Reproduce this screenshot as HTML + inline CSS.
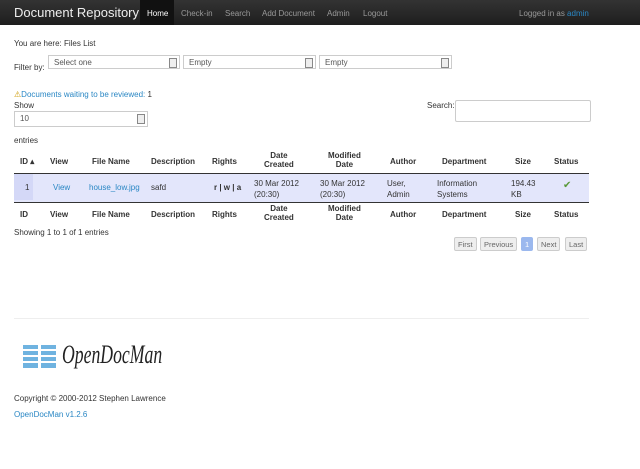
<!DOCTYPE html>
<html><head><style>
body{margin:0;width:640px;height:469px;background:#fff;font-family:"Liberation Sans",sans-serif;font-size:8px;color:#333;position:relative;overflow:hidden}
.a{position:absolute;white-space:nowrap}
.nav{position:absolute;left:0;top:0;width:640px;height:25px;background:linear-gradient(#333,#1e1e1e)}
.nav .a{color:#999;font-size:8px;top:9px}
.sel{position:absolute;height:14px;border:1px solid #ccc;background:#fff;box-sizing:border-box;font-size:8px;color:#555;padding:2px 5px}
.sel:after{content:"";position:absolute;right:2px;top:2px;width:6px;height:8px;border:1px solid #888;background:#eee}
a,.lk{color:#2a87c4}
.th{font-weight:bold;color:#333;text-align:center}
.btn{position:absolute;top:237px;height:14px;border:1px solid #ccc;background:#eee;border-radius:2px;font-size:7.5px;color:#666;line-height:13px;padding:0 3px;box-sizing:border-box}
</style></head><body>
<div class="nav">
<div class="a" style="left:14px;top:5px;font-size:13px;color:#eee">Document Repository</div>
<div style="position:absolute;left:140px;top:0;width:34px;height:25px;background:#111"></div>
<div class="a" style="left:147px;color:#fff">Home</div>
<div class="a" style="left:181px">Check-in</div>
<div class="a" style="left:225px">Search</div>
<div class="a" style="left:262px">Add Document</div>
<div class="a" style="left:327px">Admin</div>
<div class="a" style="left:363px">Logout</div>
<div class="a" style="left:519px">Logged in as <span style="color:#2a87c4">admin</span></div>
</div>
<div class="a" style="left:14px;top:39px">You are here: Files List</div>
<div class="a" style="left:14px;top:63px">Filter by:</div>
<div class="sel" style="left:48px;top:55px;width:132px">Select one</div>
<div class="sel" style="left:183px;top:55px;width:133px">Empty</div>
<div class="sel" style="left:319px;top:55px;width:133px">Empty</div>
<div class="a lk" style="left:14px;top:90px"><span style="color:#c90">⚠</span>Documents waiting to be reviewed: <span style="color:#333">1</span></div>
<div class="a" style="left:14px;top:101px">Show</div>
<div class="sel" style="left:14px;top:111px;width:134px;height:16px">10</div>
<div class="a" style="left:427px;top:101px">Search:</div>
<div style="position:absolute;left:455px;top:100px;width:134px;height:20px;border:1px solid #ccc;border-radius:2px"></div>
<div class="a" style="left:14px;top:136px">entries</div>
<div style="position:absolute;left:14px;top:173px;width:575px;height:28px;background:#e3e6fb;border-top:1px solid #333;border-bottom:1px solid #333"></div>
<div style="position:absolute;left:14px;top:174px;width:19px;height:26px;background:#d4d8f7"></div>
<div class="a th" style="left:20px;top:157px">ID ▴</div>
<div class="a th" style="left:50px;top:157px">View</div>
<div class="a th" style="left:92px;top:157px">File Name</div>
<div class="a th" style="left:151px;top:157px">Description</div>
<div class="a th" style="left:212px;top:157px">Rights</div>
<div class="a th" style="left:264px;top:151px">Date<br>Created</div>
<div class="a th" style="left:328px;top:151px">Modified<br>Date</div>
<div class="a th" style="left:390px;top:157px">Author</div>
<div class="a th" style="left:442px;top:157px">Department</div>
<div class="a th" style="left:515px;top:157px">Size</div>
<div class="a th" style="left:554px;top:157px">Status</div>
<div class="a" style="left:25px;top:183px">1</div>
<div class="a lk" style="left:53px;top:183px">View</div>
<div class="a lk" style="left:89px;top:183px">house_low.jpg</div>
<div class="a" style="left:151px;top:183px">safd</div>
<div class="a" style="left:214px;top:183px;font-weight:bold">r | w | a</div>
<div class="a" style="left:254px;top:178px;line-height:11px">30 Mar 2012<br>(20:30)</div>
<div class="a" style="left:320px;top:178px;line-height:11px">30 Mar 2012<br>(20:30)</div>
<div class="a" style="left:387px;top:178px;line-height:11px">User,<br>Admin</div>
<div class="a" style="left:437px;top:178px;line-height:11px">Information<br>Systems</div>
<div class="a" style="left:511px;top:178px;line-height:11px">194.43<br>KB</div>
<div class="a" style="left:563px;top:180px;color:#5a9a3a;font-size:10px">✔</div>
<div class="a th" style="left:20px;top:210px">ID</div>
<div class="a th" style="left:50px;top:210px">View</div>
<div class="a th" style="left:92px;top:210px">File Name</div>
<div class="a th" style="left:151px;top:210px">Description</div>
<div class="a th" style="left:212px;top:210px">Rights</div>
<div class="a th" style="left:264px;top:204px">Date<br>Created</div>
<div class="a th" style="left:328px;top:204px">Modified<br>Date</div>
<div class="a th" style="left:390px;top:210px">Author</div>
<div class="a th" style="left:442px;top:210px">Department</div>
<div class="a th" style="left:515px;top:210px">Size</div>
<div class="a th" style="left:554px;top:210px">Status</div>
<div class="a" style="left:14px;top:228px">Showing 1 to 1 of 1 entries</div>
<div class="btn" style="left:454px">First</div>
<div class="btn" style="left:480px">Previous</div>
<div class="btn" style="left:521px;background:#9bb8ee;color:#fff;border-color:#9bb8ee">1</div>
<div class="btn" style="left:537px">Next</div>
<div class="btn" style="left:565px">Last</div>
<div style="position:absolute;left:14px;top:318px;width:575px;border-top:1px solid #eee"></div>
<svg style="position:absolute;left:23px;top:343px" width="35" height="28"><g fill="#6fb3e0"><rect x="0" y="2" width="15" height="4"/><rect x="0" y="8" width="15" height="4"/><rect x="0" y="14" width="15" height="4"/><rect x="0" y="20" width="15" height="5"/><rect x="18" y="2" width="15" height="4"/><rect x="18" y="8" width="15" height="4"/><rect x="18" y="14" width="15" height="4"/><rect x="18" y="20" width="15" height="5"/></g></svg>
<div class="a" style="left:62px;top:340px;font-family:'Liberation Serif',serif;font-style:italic;font-size:26px;color:#222;transform:scaleX(0.68);transform-origin:left top">OpenDocMan</div>
<div class="a" style="left:14px;top:394px">Copyright © 2000-2012 Stephen Lawrence</div>
<div class="a lk" style="left:14px;top:410px">OpenDocMan v1.2.6</div>
</body></html>
